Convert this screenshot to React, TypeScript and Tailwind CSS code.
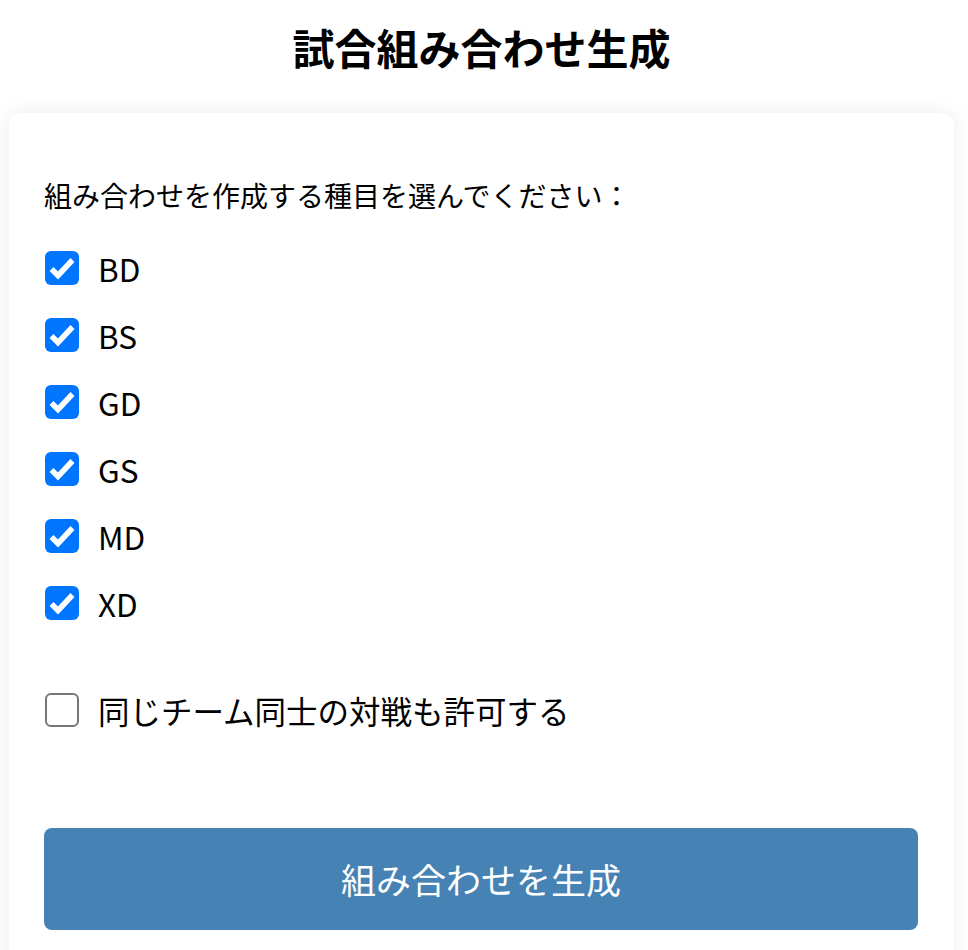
import { useState } from "react";

const EVENTS = ["BD", "BS", "GD", "GS", "MD", "XD"];

function Box({ checked }: { checked: boolean }) {
  if (!checked) {
    return (
      <span className="block w-[34px] h-[34px] shrink-0 rounded-[6px] border-[2.5px] border-[#767676] bg-white" />
    );
  }
  return (
    <span className="flex items-center justify-center w-[34px] h-[34px] shrink-0 rounded-[6px] bg-[#0075ff]">
      <svg viewBox="0 0 34 34" className="w-[34px] h-[34px]">
        <path
          d="M6.5 18 L13 24.5 L27.5 9"
          fill="none"
          stroke="white"
          strokeWidth="5.5"
          strokeLinejoin="miter"
        />
      </svg>
    </span>
  );
}

export default function App() {
  const [selected, setSelected] = useState<string[]>(EVENTS);
  const [sameTeam, setSameTeam] = useState(false);

  const toggle = (ev: string) =>
    setSelected((s) => (s.includes(ev) ? s.filter((x) => x !== ev) : [...s, ev]));

  return (
    <div
      className="min-h-screen bg-white text-black overflow-hidden"
      style={{ fontFamily: '"Noto Sans CJK JP", "Noto Sans", sans-serif' }}
    >
      <h1 className="pt-[23px] pr-[5px] text-center text-[42px] leading-[48px] font-bold">
        試合組み合わせ生成
      </h1>

      <div className="mt-[42px] ml-[9px] w-[945px] bg-white rounded-[12px] shadow-[0_0_22px_rgba(0,0,0,0.08)] pl-[36px] pr-[36px] pt-[62px] pb-[60px]">
        <p className="-ml-[1px] text-[28px] leading-[40px]">組み合わせを作成する種目を選んでください：</p>

        <div className="mt-[19px] flex flex-col">
          {EVENTS.map((ev) => (
            <label
              key={ev}
              className="h-[67px] flex items-center gap-[19px] cursor-pointer"
              onClick={() => toggle(ev)}
            >
              <Box checked={selected.includes(ev)} />
              <span className="text-[31.5px] leading-[40px]">{ev}</span>
            </label>
          ))}
        </div>

        <label
          className="mt-[40px] h-[67px] flex items-center gap-[19px] cursor-pointer"
          onClick={() => setSameTeam((v) => !v)}
        >
          <Box checked={sameTeam} />
          <span className="text-[31.5px] leading-[40px]">同じチーム同士の対戦も許可する</span>
        </label>

        <button className="mt-[85px] -ml-[1px] w-[874px] h-[102px] rounded-[8px] bg-[#4682b4] text-white text-[35px] leading-[44px]">
          組み合わせを生成
        </button>
      </div>
    </div>
  );
}
